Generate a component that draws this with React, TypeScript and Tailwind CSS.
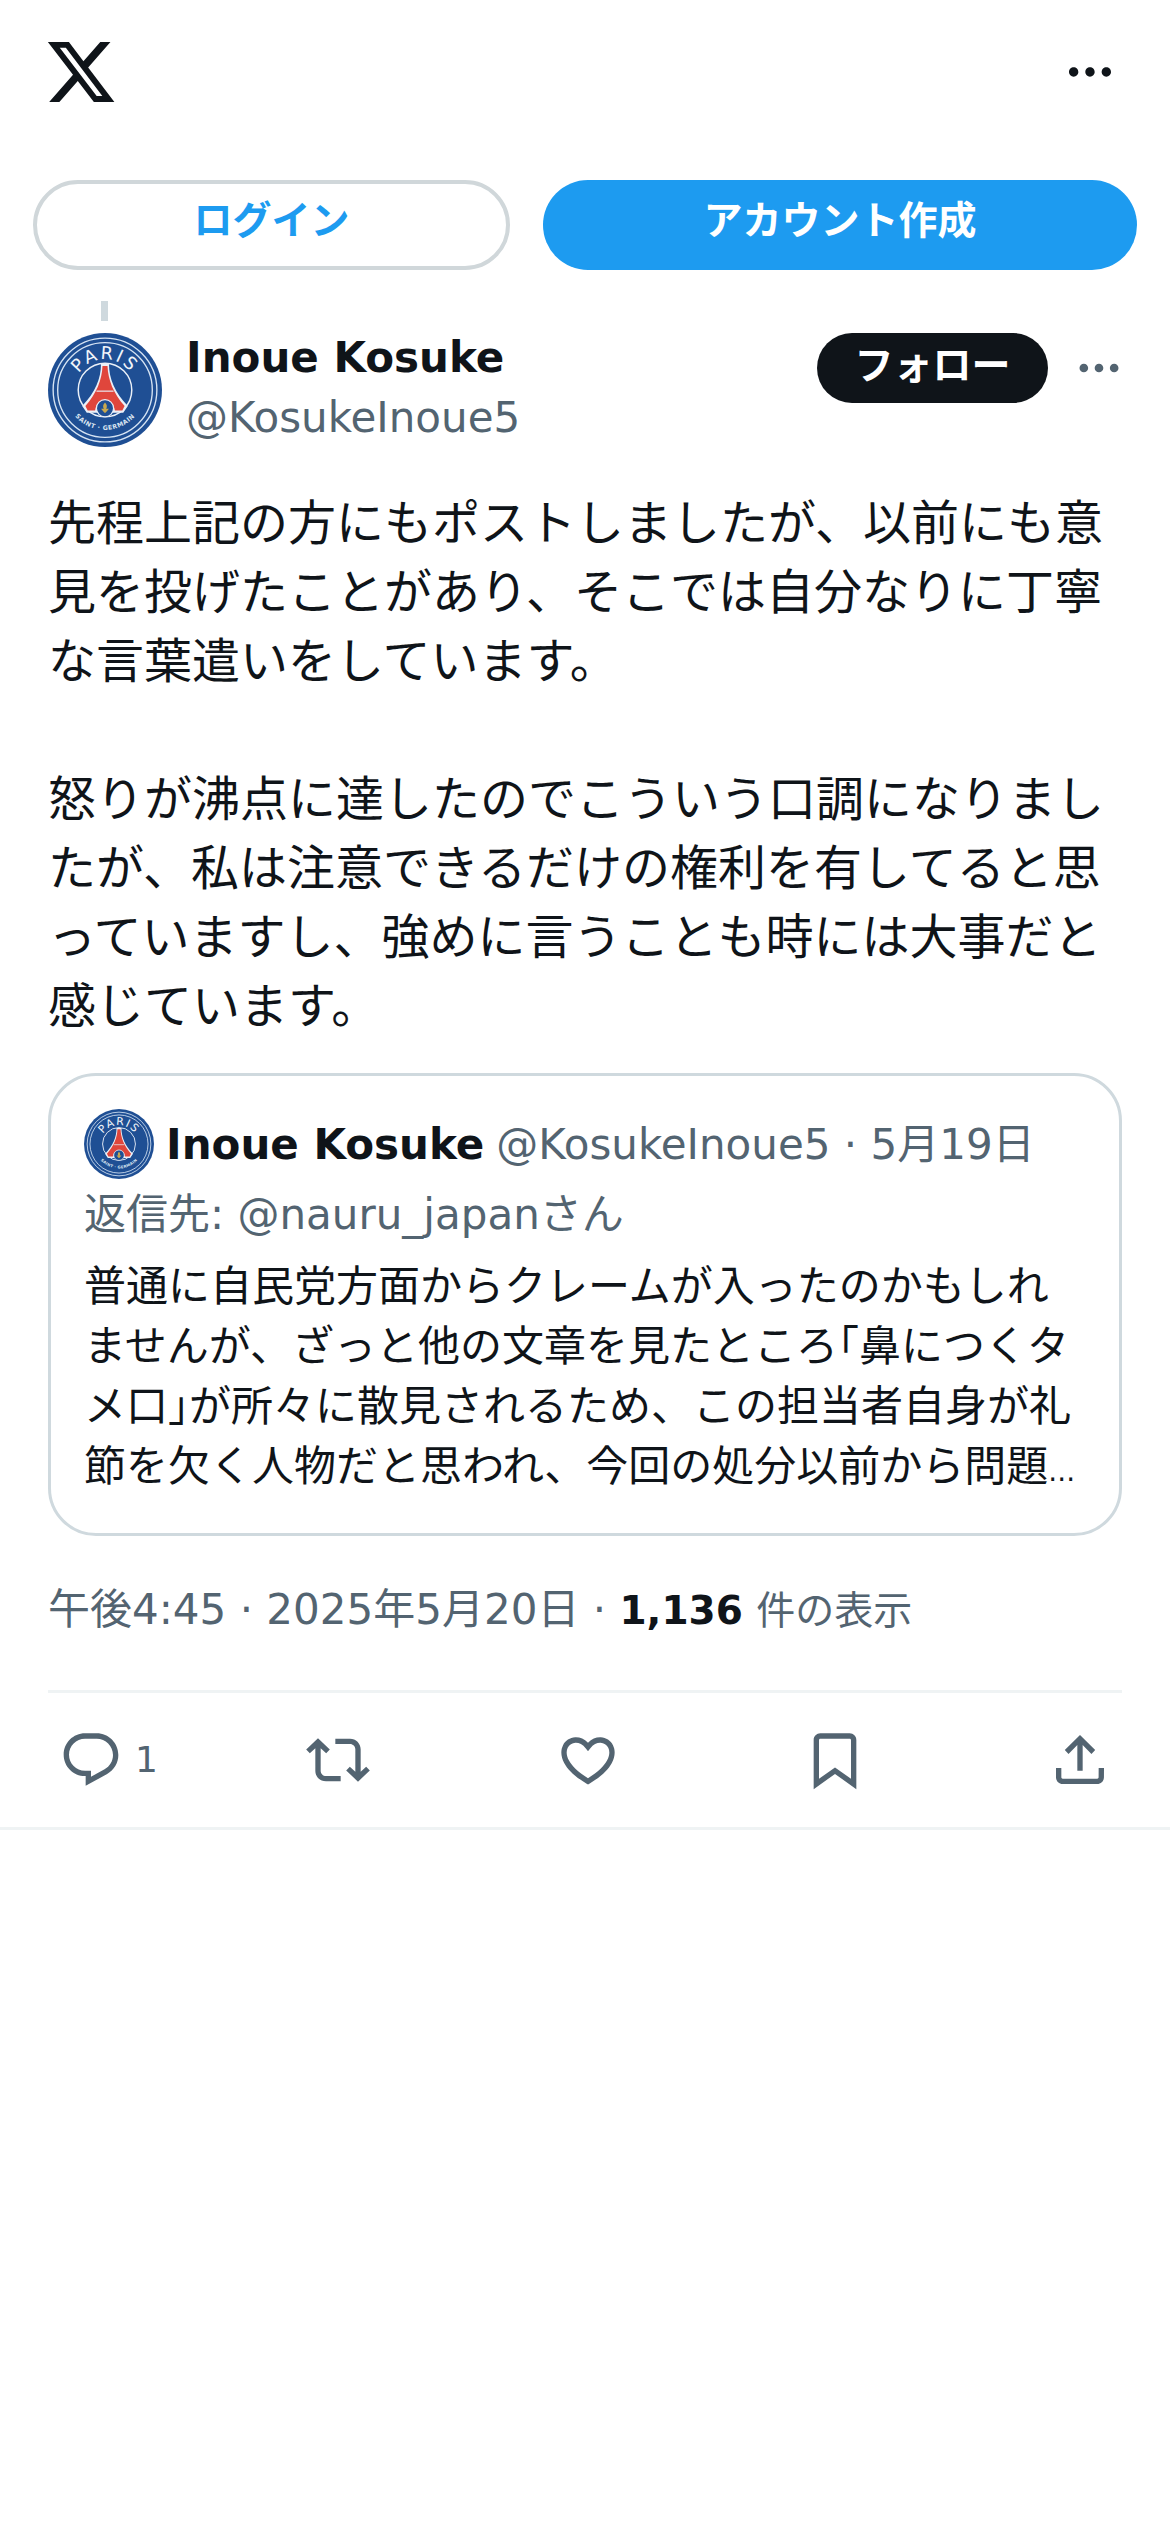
const DOTS = 'M3 12c0-1.1.9-2 2-2s2 .9 2 2-.9 2-2 2-2-.9-2-2zm9 2c1.1 0 2-.9 2-2s-.9-2-2-2-2 .9-2 2 .9 2 2 2zm7 0c1.1 0 2-.9 2-2s-.9-2-2-2-2 .9-2 2 .9 2 2 2z';

const ACTIONS = [
  { label: 'reply', count: '1', d: 'M1.751 10c0-4.42 3.584-8 8.005-8h4.366c4.49 0 8.129 3.64 8.129 8.13 0 2.96-1.607 5.68-4.196 7.11l-8.054 4.46v-3.69h-.067c-4.49.1-8.183-3.51-8.183-8.01zm8.005-6c-3.317 0-6.005 2.69-6.005 6 0 3.37 2.77 6.08 6.138 6.01l.351-.01h1.761v2.3l5.087-2.81c1.951-1.08 3.163-3.13 3.163-5.36 0-3.39-2.744-6.13-6.129-6.13H9.756z' },
  { label: 'repost', d: 'M4.5 3.88l4.432 4.14-1.364 1.46L5.5 7.55V16c0 1.1.896 2 2 2H13v2H7.5c-2.209 0-4-1.79-4-4V7.55L1.432 9.48.068 8.02 4.5 3.88zM16.5 6H11V4h5.5c2.209 0 4 1.79 4 4v8.45l2.068-1.93 1.364 1.46-4.432 4.14-4.432-4.14 1.364-1.46 2.068 1.93V8c0-1.1-.896-2-2-2z' },
  { label: 'like', d: 'M16.697 5.5c-1.222-.06-2.679.51-3.89 2.16l-.805 1.09-.806-1.09C9.984 6.01 8.526 5.44 7.304 5.5c-1.243.07-2.349.78-2.91 1.91-.552 1.12-.633 2.78.479 4.82 1.074 1.97 3.257 4.27 7.129 6.61 3.87-2.34 6.052-4.64 7.126-6.61 1.111-2.04 1.03-3.7.477-4.82-.561-1.13-1.666-1.84-2.908-1.91zm4.187 7.69c-1.351 2.48-4.001 5.12-8.379 7.67l-.503.3-.504-.3c-4.379-2.55-7.029-5.19-8.382-7.67-1.36-2.5-1.41-4.86-.514-6.67.887-1.79 2.647-2.91 4.601-3.01 1.651-.09 3.368.56 4.798 2.01 1.429-1.45 3.146-2.1 4.796-2.01 1.954.1 3.714 1.22 4.601 3.01.896 1.81.846 4.17-.514 6.67z' },
  { label: 'bookmark', d: 'M4 4.5C4 3.12 5.119 2 6.5 2h11C18.881 2 20 3.12 20 4.5v18.44l-8-5.71-8 5.71V4.5zM6.5 4c-.276 0-.5.22-.5.5v14.56l6-4.29 6 4.29V4.5c0-.28-.224-.5-.5-.5h-11z' },
  { label: 'share', d: 'M12 2.59l5.7 5.7-1.41 1.42L13 6.41V16h-2V6.41l-3.3 3.3-1.41-1.42L12 2.59zM21 15l-.02 3.51c0 1.38-1.12 2.49-2.5 2.49H5.5C4.11 21 3 19.88 3 18.5V15h2v3.5c0 .28.22.5.5.5h12.98c.28 0 .5-.22.5-.5L19 15h2z' },
];

// PSG crest, drawn small so only the rough shapes matter
function Crest({ id, className }: { id: string; className: string }) {
  return (
    <svg viewBox="0 0 100 100" className={className}>
      <circle cx="50" cy="50" r="50" fill="#1f4f94" />
      <circle cx="50" cy="50" r="45.5" fill="none" stroke="#d5e3f3" strokeWidth="1.2" />
      <circle cx="50" cy="50" r="41.5" fill="none" stroke="#d5e3f3" strokeWidth="1.2" />
      <circle cx="50" cy="50" r="23.5" fill="none" stroke="#eaf0f8" strokeWidth="1.3" />
      <path d="M46.5 27h7c0 13 5 25 16.5 37l-4 6H34l-4-6c11.500-12 16.500-24 16.500-37z" fill="#eaf0f8" />
      <path d="M47.800 29h4.400c.5 12 5 24 15 35l-2 4h-6.500c-1-6-4.500-9-8.700-9s-7.700 3-8.700 9h-6.500l-2-4c10-11 14.500-23 15-35z" fill="#e0463c" />
      <path d="M42.500 51h15" stroke="#eaf0f8" strokeWidth="1" />
      <circle cx="50" cy="66" r="7.500" fill="#1f4f94" stroke="#eaf0f8" strokeWidth="1" />
      <path d="M50 61c2 2 2 4 1 5.500h2.500l-3 3.500h-1l-3-3.500H49c-1-1.500-1-3.500 1-5.500z" fill="#c9a94f" />
      <path id={`${id}-top`} d="M23 50a27 27 0 0 1 54 0" fill="none" />
      <path id={`${id}-bottom`} d="M15 50a35 35 0 0 0 70 0" fill="none" />
      <text fontSize="15.500" fill="#f1f5fa" textAnchor="middle" letterSpacing="2" fontWeight="500">
        <textPath href={`#${id}-top`} startOffset="50%">PARIS</textPath>
      </text>
      <text fontSize="5.500" fontWeight="700" fill="#dbe6f2" textAnchor="middle" letterSpacing="0.4">
        <textPath href={`#${id}-bottom`} startOffset="50%">SAINT · GERMAIN</textPath>
      </text>
    </svg>
  );
}

export default function App() {
  return (
    <div className="min-h-[2532px] bg-white font-['DejaVu_Sans','Noto_Sans_CJK_JP',sans-serif] text-[#0f1419]">
      {/* Top bar */}
      <div className="flex h-[144px] items-center justify-between pl-[48px] pr-[52px]">
        <svg viewBox="0 0 24 24" className="-ml-[4px] h-[74px] w-[74px] fill-[#0f1419]">
          <path d="M18.244 2.25h3.308l-7.227 8.26 8.502 11.24H16.17l-5.214-6.817L4.99 21.75H1.68l7.73-8.835L1.254 2.25H8.08l4.713 6.231zm-1.161 17.52h1.833L7.084 4.126H5.117z" />
        </svg>
        <svg viewBox="0 0 24 24" className="h-[56px] w-[56px] fill-[#0f1419]">
          <path d={DOTS} />
        </svg>
      </div>

      {/* Login buttons */}
      <div className="mt-[36px] flex gap-[33px] px-[33px]">
        <div className="flex h-[90px] w-[477px] items-center justify-center rounded-full border-[4px] border-[#d0d7da] pb-[8px] text-[39px] font-bold text-[#1d9bf0]">
          ログイン
        </div>
        <div className="flex h-[90px] flex-1 items-center justify-center rounded-full bg-[#1d9bf0] pb-[8px] text-[39px] font-bold text-white">
          アカウント作成
        </div>
      </div>

      <div className="px-[48px]">
        {/* Thread line */}
        <div className="ml-[53px] mt-[31px] h-[20px] w-[7px] bg-[#cfd9de]" />

        {/* Author */}
        <div className="mt-[12px] flex items-start">
          <Crest id="main" className="h-[114px] w-[114px] shrink-0" />
          <div className="-mt-[3px] ml-[24px] flex-1">
            <div className="text-[42px] font-bold leading-[56px]">Inoue Kosuke</div>
            <div className="mt-[4px] text-[42px] leading-[56px] text-[#536471]">@KosukeInoue5</div>
          </div>
          <div className="flex h-[70px] w-[231px] items-center justify-center rounded-full bg-[#0f1419] pb-[4px] text-[39px] font-bold text-white">
            フォロー
          </div>
          <svg viewBox="0 0 24 24" className="-mr-[3px] ml-[25px] mt-[9px] h-[52px] w-[52px] fill-[#536471]">
            <path d={DOTS} />
          </svg>
        </div>

        {/* Post text */}
        <p className="mt-[42px] whitespace-pre-line text-[48px] leading-[69px]">
          {'先程上記の方にもポストしましたが、以前にも意見を投げたことがあり、そこでは自分なりに丁寧な言葉遣いをしています。\n\n怒りが沸点に達したのでこういう口調になりましたが、私は注意できるだけの権利を有してると思っていますし、強めに言うことも時には大事だと感じています。'}
        </p>

        {/* Quoted post */}
        <div className="mt-[32px] rounded-[48px] border-[3px] border-[#cfd9de] pb-[31px] pl-[33px] pr-[36px] pt-[33px]">
          <div className="flex items-center whitespace-nowrap">
            <Crest id="quote" className="h-[70px] w-[70px] shrink-0" />
            <span className="ml-[12px] text-[42px] font-bold">Inoue Kosuke</span>
            <span className="ml-[12px] text-[42px] text-[#536471]">@KosukeInoue5 · 5月19日</span>
          </div>
          <div className="mt-[4px] text-[42px] leading-[64px] text-[#536471]">返信先: @nauru_japanさん</div>
          <p className="mt-[10px] text-[42px] leading-[60px]">
            普通に自民党方面からクレームが入ったのかもしれませんが、ざっと他の文章を見たところ｢鼻につくタメ口｣が所々に散見されるため、この担当者自身が礼節を欠く人物だと思われ、今回の処分以前から問題<span className="text-[28px]">...</span>
          </p>
        </div>

        {/* Time and views */}
        <div className="mt-[44px] text-[42px] leading-[60px] text-[#536471]">
          午後4:45 · 2025年5月20日 · <span className="text-[39px] font-bold text-[#0f1419]">1,136</span>{' '}
          <span className="text-[39px]">件の表示</span>
        </div>

        <div className="mt-[49px] h-[3px] bg-[#eff3f4]" />

        {/* Actions */}
        <div className="grid h-[134px] grid-cols-[247px_250px_247px_245px_64px] items-center pl-[11px]">
          {ACTIONS.map(a => (
            <div key={a.label} className="flex items-center text-[#536471]">
              <svg viewBox="0 0 24 24" className="h-[64px] w-[64px] shrink-0 fill-[#536471]">
                <path d={a.d} />
              </svg>
              {a.count && <span className="ml-[12px] text-[36px]">{a.count}</span>}
            </div>
          ))}
        </div>
      </div>
      <div className="h-[3px] bg-[#eff3f4]" />
    </div>
  );
}
